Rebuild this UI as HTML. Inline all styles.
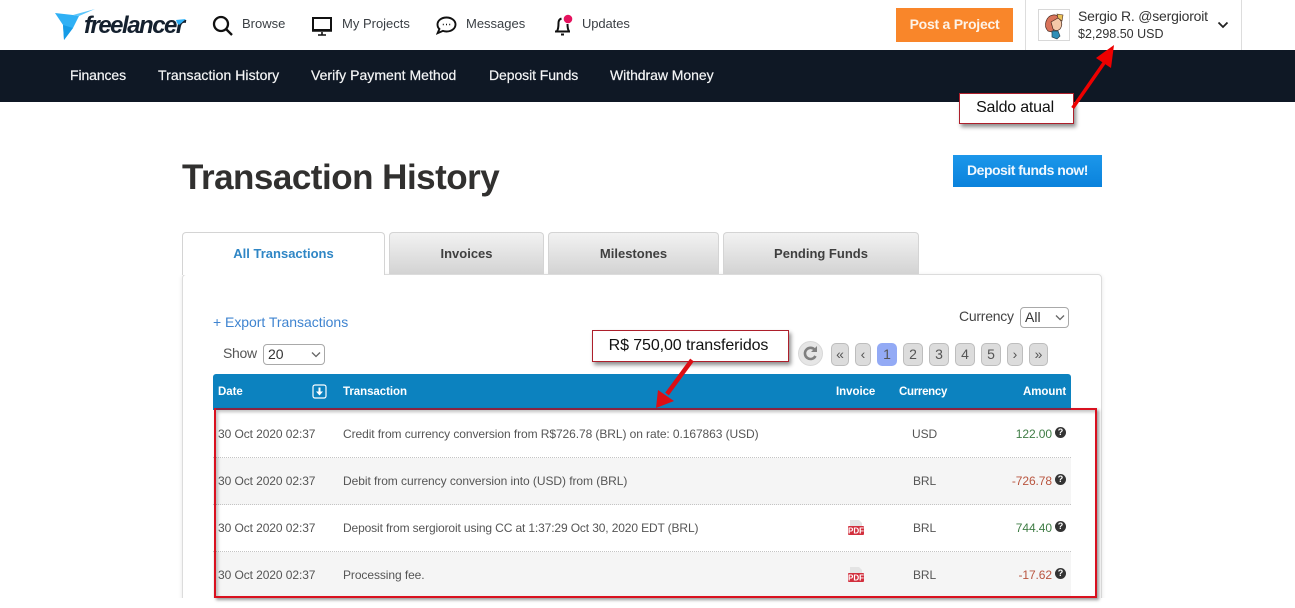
<!DOCTYPE html>
<html><head><meta charset="utf-8"><title>Transaction History</title>
<style>
html,body{margin:0;padding:0;background:#fff;width:1295px;height:608px;overflow:hidden}
#w{width:1295px;height:608px;position:relative;overflow:hidden;font-family:"Liberation Sans",sans-serif;color:#4a4a4a}
.a{position:absolute}
.t{position:absolute;white-space:nowrap;line-height:16px}
.nav{font-size:13px;color:#3a3f44;top:16px}
.sub{font-size:14px;color:#f4f5f6;top:67px;-webkit-text-stroke:.2px #f4f5f6}
.tab{position:absolute;top:232px;height:42px;box-sizing:border-box;border:1px solid #d4d4d4;border-bottom:0;border-radius:4px 4px 0 0;background:linear-gradient(#f2f2f2,#d3d3d3);text-align:center;font-weight:bold;font-size:13px;line-height:41px;color:#3f3f3f}
.pg{position:absolute;top:343px;height:23px;box-sizing:border-box;background:#dcdcdc;border:1px solid #bdbdbd;border-radius:5px;text-align:center;font-size:14px;line-height:21px;color:#555}
.th{font-size:11.500px;font-weight:bold;color:#fff;top:384px;letter-spacing:-.05px}
.row{position:absolute;left:213px;width:858px;height:47px;box-sizing:border-box;border-bottom:1px dotted #c4c4c4}
.c{font-size:12px;color:#555;position:absolute;white-space:nowrap;line-height:16px;letter-spacing:-.08px}
.r{text-align:right;width:60px;left:992px}
.sel{position:absolute;box-sizing:border-box;height:21px;border:1px solid #a9a9a9;border-radius:4px;background:#fff;font-size:14px;line-height:19px;color:#333;padding-left:4px}
.q{position:absolute;width:11px;height:11px;left:1055px;border-radius:50%;background:#333;color:#fff;font-size:9px;font-weight:bold;line-height:11px;text-align:center}
.note{position:absolute;box-sizing:border-box;background:#fff;border:1.500px solid #ad1f2b;box-shadow:2px 3px 4px rgba(0,0,0,.45);color:#111;font-size:16px;text-align:center}
</style></head><body><div id="w">

<!-- top bar -->
<svg class="a" style="left:52px;top:8px" width="136" height="34" viewBox="0 0 136 34">
<path fill="#2fb0f5" d="M3 5L21 7 27 8 21 20 12 32 11 17Z"/>
<path fill="#5cc6fb" d="M21 7L43 1 27 8Z"/>
<path fill="#159be6" d="M11 17L21 20 12 32Z"/>
</svg>
<div class="t" style="left:84px;top:12px;font-size:24px;line-height:27px;font-weight:bold;font-style:italic;color:#14202e;letter-spacing:-1.500px">freelancer</div>
<svg class="a" style="left:172px;top:17px" width="16" height="10" viewBox="0 0 16 10"><path fill="#2fb0f5" d="M4 3L14 2 7 8 5 6Z"/></svg>

<svg class="a" style="left:212px;top:14px" width="22" height="22" viewBox="0 0 22 22" fill="none" stroke="#111" stroke-width="2.300"><circle cx="9" cy="10" r="7"/><path d="M14 15l6 6"/></svg>
<div class="t nav" style="left:242px">Browse</div>
<svg class="a" style="left:311px;top:16px" width="22" height="20" viewBox="0 0 22 20" fill="none" stroke="#111" stroke-width="2"><rect x="2" y="2" width="18" height="12"/><path d="M1 14.500h20" stroke-width="2.500"/><path d="M7 19h8M11 16v3" stroke-width="1.600"/></svg>
<div class="t nav" style="left:342px">My Projects</div>
<svg class="a" style="left:436px;top:16px" width="21" height="19" viewBox="0 0 21 19" fill="none" stroke="#111" stroke-width="1.900"><path d="M10.500 1.500c5 0 9 3 9 7s-4 7-9 7c-1.300 0-2.500-.2-3.600-.6L1.600 17.200l1.800-4.200C2 11.800 1.500 10.300 1.500 8.500c0-4 4-7 9-7z"/><path d="M6.800 8.500h1M10 8.500h1M13.200 8.500h1" stroke-width="1.500"/></svg>
<div class="t nav" style="left:466px">Messages</div>
<svg class="a" style="left:552px;top:14px" width="22" height="22" viewBox="0 0 22 22" fill="none" stroke="#111" stroke-width="2"><path d="M3 17.500h15M5 17c1.500-2 1.500-5 1.500-8 0-2.500 1.500-4 3-4.500"/><path d="M15.500 10c0 3 .2 5 1.300 7"/><path d="M9 20.500h3" stroke-width="2"/><circle cx="16" cy="5" r="4.300" fill="#e5125e" stroke="none"/></svg>
<div class="t nav" style="left:582px;letter-spacing:-.1px">Updates</div>

<div class="t" style="left:896px;top:8px;width:117px;height:34px;line-height:33px;background:#f9862a;color:#fdf3e8;font-size:14px;font-weight:bold;text-align:center;letter-spacing:-.25px">Post a Project</div>
<div class="a" style="left:1025px;top:0;width:217px;height:50px;box-sizing:border-box;border-left:1px solid #ddd;border-right:1px solid #ddd"></div>
<svg class="a" style="left:1038px;top:9px" width="32" height="32" viewBox="0 0 32 32">
<rect x=".5" y=".5" width="31" height="31" fill="#fff" stroke="#d8d8d8"/>
<path fill="#d9735a" stroke="#4a2a20" stroke-width=".7" d="M10 22C5 17 8 7 15 6c3-.5 5 1 6 3l-5 5 2 5-4 4z"/>
<path fill="#f4c9a8" stroke="#4a2a20" stroke-width=".7" d="M13 13l7-4c4 2 5 7 2 11-2 2-5 2-7 0z"/>
<path fill="#e9c25a" stroke="#4a2a20" stroke-width=".6" d="M19 5l6 1-1 6-4-3z"/>
<path fill="#2f8fb8" stroke="#24424f" stroke-width=".7" d="M14 22l6 0 2 5-3 3-5-2z"/>
</svg>
<div class="t" style="left:1078px;top:8px;font-size:14px;color:#333;letter-spacing:-.2px">Sergio R. @sergioroit</div>
<div class="t" style="left:1078px;top:26px;font-size:12.500px;color:#333">$2,298.50 USD</div>
<svg class="a" style="left:1217px;top:20px" width="12" height="10" viewBox="0 0 12 10" fill="none" stroke="#222" stroke-width="1.800"><path d="M1.500 2.500l4.500 4.500 4.500-4.500"/></svg>

<!-- dark nav -->
<div class="a" style="left:0;top:50px;width:1295px;height:52px;background:#0f1825"></div>
<div class="t sub" style="left:70px;letter-spacing:-.1px">Finances</div>
<div class="t sub" style="left:158px;letter-spacing:.06px">Transaction History</div>
<div class="t sub" style="left:311px;letter-spacing:.03px">Verify Payment Method</div>
<div class="t sub" style="left:489px;letter-spacing:-.08px">Deposit Funds</div>
<div class="t sub" style="left:610px;letter-spacing:-.05px">Withdraw Money</div>

<!-- heading -->
<div class="t" style="left:182px;top:157px;font-size:35px;line-height:42px;font-weight:bold;color:#31302f;letter-spacing:-.5px">Transaction History</div>
<div class="t" style="left:953px;top:155px;width:149px;height:32px;line-height:31px;background:linear-gradient(#1c97ea,#0a82dc);color:#f1f8fe;font-size:14px;font-weight:bold;text-align:center;letter-spacing:-.5px">Deposit funds now!</div>

<!-- panel -->
<div class="a" style="left:182px;top:274px;width:920px;height:340px;box-sizing:border-box;background:#fff;border:1px solid #dcdcdc;border-radius:4px;box-shadow:0 1px 5px rgba(0,0,0,.1)"></div>
<div class="tab" style="left:182px;width:203px;height:43px;background:#fff;color:#2f86c5;z-index:2">All Transactions</div>
<div class="tab" style="left:389px;width:155px">Invoices</div>
<div class="tab" style="left:548px;width:171px">Milestones</div>
<div class="tab" style="left:723px;width:196px">Pending Funds</div>

<div class="t" style="left:213px;top:314px;font-size:14px;color:#3f84d0;letter-spacing:-.03px">+ Export Transactions</div>
<div class="t" style="left:223px;top:345px;font-size:14px;color:#555;letter-spacing:-.3px">Show</div>
<div class="sel" style="left:263px;top:344px;width:62px">20</div>
<svg class="a" style="left:311px;top:351px" width="10" height="8" viewBox="0 0 10 8" fill="none" stroke="#666" stroke-width="1.300"><path d="M1 1.500l4 4 4-4"/></svg>
<div class="t" style="left:959px;top:308px;font-size:14px;color:#444;letter-spacing:-.25px">Currency</div>
<div class="sel" style="left:1020px;top:307px;width:49px">All</div>
<svg class="a" style="left:1055px;top:314px" width="10" height="8" viewBox="0 0 10 8" fill="none" stroke="#666" stroke-width="1.300"><path d="M1 1.500l4 4 4-4"/></svg>

<!-- pagination -->
<svg class="a" style="left:798px;top:341px" width="25" height="25" viewBox="0 0 25 25"><circle cx="12.500" cy="12.500" r="12" fill="#e6e6e6" stroke="#d8d8d8"/><path d="M17.500 15a5.600 5.600 0 1 1-.5-6" fill="none" stroke="#808080" stroke-width="2.600"/><path d="M19 5v6h-6z" fill="#808080"/></svg>
<div class="pg" style="left:831px;width:18px">«</div>
<div class="pg" style="left:855px;width:16px">‹</div>
<div class="pg" style="left:877px;width:20px;background:#93aaf5;border-color:#93aaf5">1</div>
<div class="pg" style="left:903px;width:20px">2</div>
<div class="pg" style="left:929px;width:20px">3</div>
<div class="pg" style="left:955px;width:20px">4</div>
<div class="pg" style="left:981px;width:20px">5</div>
<div class="pg" style="left:1007px;width:16px">›</div>
<div class="pg" style="left:1029px;width:19px">»</div>

<!-- table header -->
<div class="a" style="left:213px;top:374px;width:858px;height:36px;background:#0c82bf;border-radius:3px 3px 0 0"></div>
<div class="t th" style="left:218px">Date</div>
<svg class="a" style="left:312px;top:384px" width="15" height="15" viewBox="0 0 15 15"><rect x="1" y="1" width="13" height="13" rx="2" fill="none" stroke="#fff" stroke-width="1.200"/><path d="M7.500 3.500v5" stroke="#fff" stroke-width="2"/><path d="M4 7.500h7l-3.500 4z" fill="#fff"/></svg>
<div class="t th" style="left:343px">Transaction</div>
<div class="t th" style="left:836px">Invoice</div>
<div class="t th" style="left:899px;letter-spacing:-.3px">Currency</div>
<div class="t th" style="left:1023px">Amount</div>

<!-- rows -->
<div class="row" style="top:411px;background:#fff"></div>
<div class="row" style="top:458px;background:#f5f5f5"></div>
<div class="row" style="top:505px;background:#fff"></div>
<div class="row" style="top:552px;background:#f5f5f5"></div>

<div class="c" style="left:218px;top:426px">30 Oct 2020 02:37</div>
<div class="c" style="left:343px;top:426px">Credit from currency conversion from R$726.78 (BRL) on rate: 0.167863 (USD)</div>
<div class="c" style="left:912px;top:426px">USD</div>
<div class="c r" style="top:426px;color:#3f7d45">122.00</div>
<div class="q" style="top:427px">?</div>

<div class="c" style="left:218px;top:473px">30 Oct 2020 02:37</div>
<div class="c" style="left:343px;top:473px;letter-spacing:-.06px">Debit from currency conversion into (USD) from (BRL)</div>
<div class="c" style="left:913px;top:473px">BRL</div>
<div class="c r" style="top:473px;color:#b9553f">-726.78</div>
<div class="q" style="top:474px">?</div>

<div class="c" style="left:218px;top:520px">30 Oct 2020 02:37</div>
<div class="c" style="left:343px;top:520px;letter-spacing:-.13px">Deposit from sergioroit using CC at 1:37:29 Oct 30, 2020 EDT (BRL)</div>
<div class="c" style="left:913px;top:520px">BRL</div>
<div class="c r" style="top:520px;color:#3f7d45">744.40</div>
<div class="q" style="top:521px">?</div>

<div class="c" style="left:218px;top:567px">30 Oct 2020 02:37</div>
<div class="c" style="left:343px;top:567px">Processing fee.</div>
<div class="c" style="left:913px;top:567px">BRL</div>
<div class="c r" style="top:567px;color:#b9553f">-17.62</div>
<div class="q" style="top:568px">?</div>

<!-- pdf icons -->
<svg class="a" style="left:848px;top:520px" width="16" height="16" viewBox="0 0 16 16"><path d="M2 0h9l3 3v6H2z" fill="#e4e4e4"/><rect y="6" x="0" width="16" height="9" rx="1" fill="#d22f3d"/><text x="8" y="13.500" font-family="Liberation Sans" font-size="8" font-weight="bold" fill="#fff" text-anchor="middle">PDF</text></svg>
<svg class="a" style="left:848px;top:567px" width="16" height="16" viewBox="0 0 16 16"><path d="M2 0h9l3 3v6H2z" fill="#e4e4e4"/><rect y="6" x="0" width="16" height="9" rx="1" fill="#d22f3d"/><text x="8" y="13.500" font-family="Liberation Sans" font-size="8" font-weight="bold" fill="#fff" text-anchor="middle">PDF</text></svg>

<!-- bottom white strip -->
<div class="a" style="left:0;top:598px;width:1295px;height:10px;background:#fff"></div>

<!-- annotations -->
<div class="a" style="left:214px;top:408px;width:883px;height:190px;box-sizing:border-box;border:2px solid #d9111f;box-shadow:2px 2px 3px rgba(0,0,0,.4),inset 2px 2px 3px rgba(0,0,0,.25)"></div>
<div class="a" style="left:216px;top:408px;width:855px;height:2px;background:#8b2440"></div>
<div class="note" style="left:959px;top:93px;width:115px;height:31px;line-height:28px;letter-spacing:-.2px;padding-right:3px">Saldo atual</div>
<div class="note" style="left:592px;top:330px;width:197px;height:32px;line-height:29px;letter-spacing:-.1px;padding-right:4px">R$ 750,00 transferidos</div>
<svg class="a" style="left:640px;top:40px;overflow:visible" width="500" height="380" viewBox="0 0 500 380">
<path d="M432.700 68L464 23" stroke="#ee0000" stroke-width="3.500" fill="none"/>
<path d="M474 5L456 18L471 28Z" fill="#ee0000"/>
<path d="M52 320L27 354" stroke="#dc0e14" stroke-width="4.500" fill="none"/>
<path d="M16 368L18 350L34 361Z" fill="#dc0e14"/>
</svg>
</div></body></html>
